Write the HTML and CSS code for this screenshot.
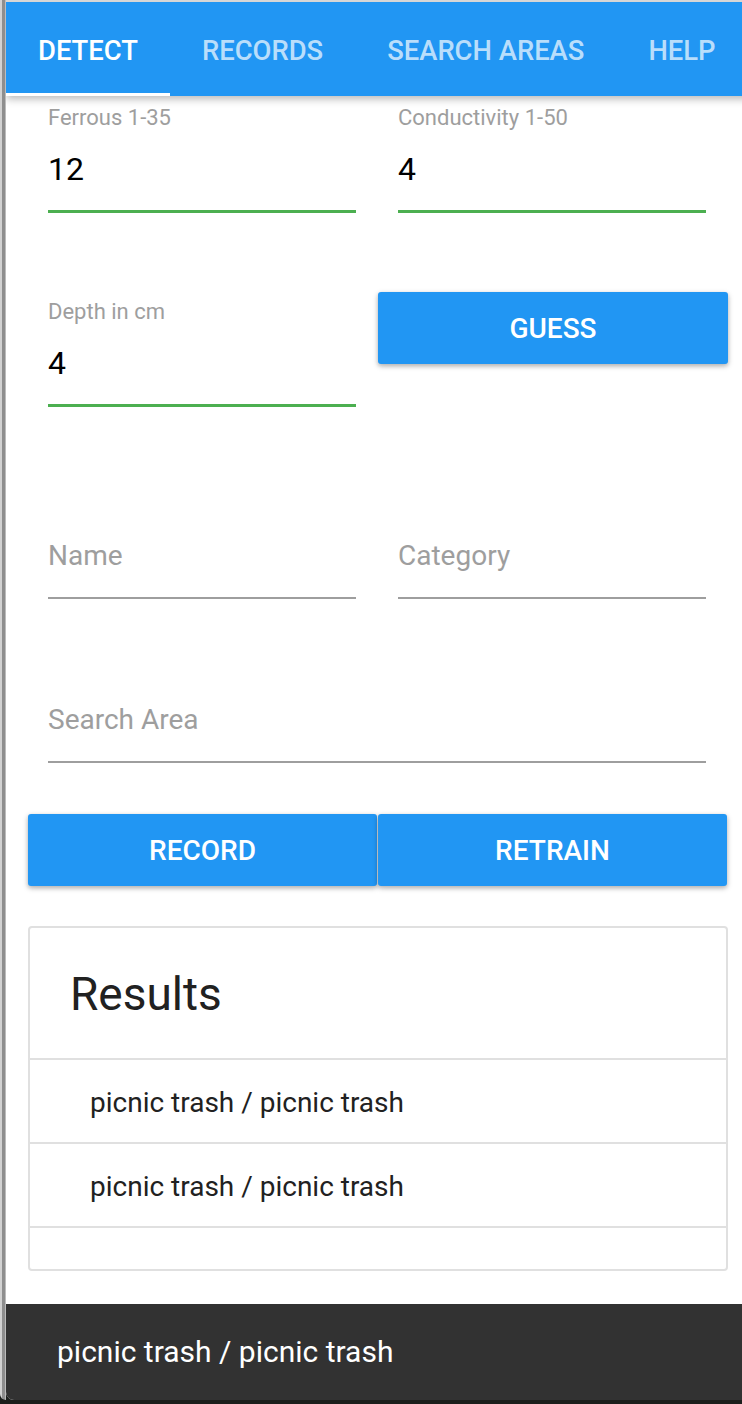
FILE: index.html
```html
<!DOCTYPE html>
<html lang="en">
<head>
<meta charset="utf-8">
<title>Detect</title>
<link rel="stylesheet" href="styles.css">
</head>
<body>
<div class="screen">
  <div class="side-strip"></div>
  <div class="window">
    <header class="appbar">
      <nav class="tabs">
        <div class="tab active">DETECT</div>
        <div class="tab">RECORDS</div>
        <div class="tab">SEARCH AREAS</div>
        <div class="tab">HELP</div>
      </nav>
    </header>

    <main class="content">
      <div class="row row-1">
        <div class="field">
          <div class="label">Ferrous 1-35</div>
          <div class="value">12</div>
          <div class="underline focused"></div>
        </div>
        <div class="field">
          <div class="label">Conductivity 1-50</div>
          <div class="value">4</div>
          <div class="underline focused"></div>
        </div>
      </div>

      <div class="row row-2">
        <div class="field">
          <div class="label">Depth in cm</div>
          <div class="value">4</div>
          <div class="underline focused"></div>
        </div>
        <div class="btn-cell">
          <button class="btn">GUESS</button>
        </div>
      </div>

      <div class="row row-3">
        <div class="field">
          <div class="label"></div>
          <div class="value hint">Name</div>
          <div class="underline"></div>
        </div>
        <div class="field">
          <div class="label"></div>
          <div class="value hint">Category</div>
          <div class="underline"></div>
        </div>
      </div>

      <div class="row row-4 single">
        <div class="field">
          <div class="label"></div>
          <div class="value hint">Search Area</div>
          <div class="underline"></div>
        </div>
      </div>

      <div class="row actions">
        <button class="btn">RECORD</button>
        <button class="btn">RETRAIN</button>
      </div>

      <section class="card">
        <h2 class="card-title">Results</h2>
        <ul class="list">
          <li class="list-item">picnic trash / picnic trash</li>
          <li class="list-item">picnic trash / picnic trash</li>
        </ul>
      </section>
    </main>

    <div class="snackbar">picnic trash / picnic trash</div>
  </div>
</div>
</body>
</html>
```
FILE: styles.css
```css
html, body {
  margin: 0;
  padding: 0;
  overflow: hidden;
}

body {
  background: #1c1f1c;
  font-family: Roboto, "Liberation Sans", Arial, sans-serif;
  width: 742px;
  height: 1404px;
}

.screen {
  display: flex;
  height: 1400px;
}

.side-strip {
  flex: 0 0 6px;
  background: linear-gradient(to right, #d2d2d2 0 2px, #8e8e8e 2px 5px, #bcbcbc 5px 6px);
  border-bottom-left-radius: 8px;
}

.window {
  flex: 0 0 744px;
  display: flex;
  flex-direction: column;
  background: #ffffff;
  border-top: 2px solid #d6d6d6;
  border-bottom-left-radius: 8px;
  overflow: hidden;
}

/* App bar / tabs */
.appbar {
  flex: 0 0 auto;
  height: 94px;
  background: #2196f3;
  box-shadow: 0 3px 8px rgba(0, 0, 0, 0.28);
  position: relative;
  z-index: 1;
  overflow: hidden;
}

.tabs {
  display: flex;
  height: 100%;
}

.tab {
  flex: 0 0 auto;
  padding: 4px 32px 0;
  line-height: 90px;
  font-size: 27.4px;
  font-weight: 500;
  color: rgba(255, 255, 255, 0.7);
  white-space: nowrap;
}

.tab.active {
  color: #ffffff;
  box-shadow: inset 0 -3px 0 #ffffff;
}

/* Content */
.content {
  flex: 1 1 auto;
  width: 700px;
  padding: 0 22px;
}

.row {
  display: grid;
  grid-template-columns: 350px 350px;
}

.row.single {
  grid-template-columns: 700px;
}

.row-2 { margin-top: 77px; }
.row-3 { margin-top: 76px; }
.row-4 { margin-top: 48px; }

.field {
  padding: 9px 22px 0 20px;
}

.label {
  height: 26px;
  line-height: 26px;
  font-size: 22px;
  color: #9e9e9e;
}

.value {
  margin-top: 19px;
  height: 38px;
  line-height: 38px;
  font-size: 32px;
  color: #000000;
}

.value.hint {
  font-size: 28px;
  color: #9e9e9e;
}

.underline {
  margin-top: 22px;
  height: 2px;
  background: #9e9e9e;
}

.underline.focused {
  height: 3px;
  background: #4caf50;
}

.btn-cell {
  padding-top: 2px;
}

.btn {
  display: block;
  width: 100%;
  height: 72px;
  border: 0;
  border-radius: 3px;
  background: #2196f3;
  color: #ffffff;
  font-family: Roboto, "Liberation Sans", Arial, sans-serif;
  font-size: 28px;
  font-weight: 500;
  padding: 0;
  box-shadow: 0 2px 6px rgba(0, 0, 0, 0.16), 0 2px 4px rgba(0, 0, 0, 0.2);
}

.actions {
  margin-top: 51px;
}

.actions .btn {
  width: 349px;
}

/* Card */
.card {
  margin-top: 40px;
  border: 2px solid #e0e0e0;
  border-radius: 4px;
  height: 345px;
  box-sizing: border-box;
}

.card-title {
  margin: 0;
  height: 132px;
  box-sizing: border-box;
  padding-left: 40px;
  padding-top: 38px;
  line-height: 56px;
  font-size: 46px;
  font-weight: 400;
  color: #212121;
  border-bottom: 2px solid #e0e0e0;
}

.list {
  list-style: none;
  margin: 0;
  padding: 0;
}

.list-item {
  height: 78px;
  padding-top: 4px;
  line-height: 78px;
  padding-left: 60px;
  font-size: 28px;
  color: #212121;
  border-bottom: 2px solid #e0e0e0;
}

/* Snackbar */
.snackbar {
  margin-top: 33px;
  height: 96px;
  line-height: 96px;
  background: #323232;
  color: #ffffff;
  font-size: 30px;
  padding-left: 51px;
}
```
